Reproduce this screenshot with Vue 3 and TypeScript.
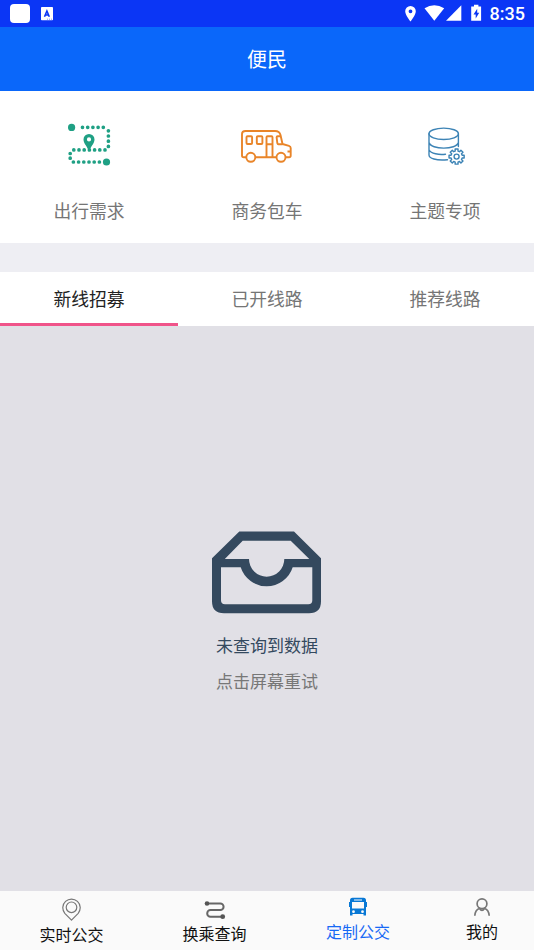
<script setup lang="ts">
import { ref } from 'vue'

type IconName = 'route' | 'van' | 'database'
type NavIcon = 'pin' | 'transfer' | 'bus' | 'user'

const services: { label: string; icon: IconName }[] = [
  { label: '出行需求', icon: 'route' },
  { label: '商务包车', icon: 'van' },
  { label: '主题专项', icon: 'database' },
]
const tabs: string[] = ['新线招募', '已开线路', '推荐线路']
const activeTab = ref<number>(0)

const navItems: { label: string; icon: NavIcon }[] = [
  { label: '实时公交', icon: 'pin' },
  { label: '换乘查询', icon: 'transfer' },
  { label: '定制公交', icon: 'bus' },
  { label: '我的', icon: 'user' },
]
const activeNav = ref<NavIcon>('bus')

// Outline of an eight-toothed gear around (cx, cy)
function gearPath(cx: number, cy: number, inner: number, outer: number): string {
  const points: string[] = []
  for (let i = 0; i < 8; i++) {
    const base = (i * Math.PI) / 4
    const corners: [number, number][] = [
      [-0.25, inner],
      [-0.19, outer],
      [0.19, outer],
      [0.25, inner],
    ]
    for (const [offset, r] of corners) {
      points.push(`${(cx + r * Math.cos(base + offset)).toFixed(2)} ${(cy + r * Math.sin(base + offset)).toFixed(2)}`)
    }
  }
  return `M${points.join('L')}Z`
}
const gear = gearPath(39.6, 37.6, 5.7, 7.7)
</script>

<template>
  <div class="screen">
    <div class="status">
      <div class="status-left">
        <span class="blank-app"></span>
        <svg class="a-app" width="12" height="14" viewBox="0 0 12 14">
          <rect width="12" height="13.3" rx="0.8" fill="#fff" />
          <path d="M3.500 9.800L5.900 4L8.300 9.800M4.500 8H7.300" fill="none" stroke="#0b36f5" stroke-width="1.600" />
          <path d="M6 12.200h1M8 12.200h1M10 12.200h1" stroke="#0b36f5" stroke-width="0.500" />
        </svg>
      </div>
      <div class="status-right">
        <svg width="82" height="20" viewBox="403 4 82 20" fill="#fff">
          <path fill-rule="evenodd" d="M410.500 6a5.300 5.300 0 0 0-5.300 5.300c0 4 5.300 10.200 5.300 10.200s5.300-6.200 5.300-10.200A5.300 5.300 0 0 0 410.500 6Zm0 3.400a1.900 1.900 0 1 1 0 3.800a1.900 1.900 0 0 1 0-3.800Z" />
          <path d="M424.500 8.300Q434.300 2 444.200 8.300L434.300 20.700Z" />
          <path d="M461.300 5.300V20.800H446Z" />
          <path fill-rule="evenodd" d="M474 4.800h4.400v1.600h2.700v14.400h-9.900V6.400h2.800ZM477.200 8.800l-3.700 5.600h2.200v4.200l3.500-5.800h-2Z" />
        </svg>
        <span class="clock">8:35</span>
      </div>
    </div>

    <header class="header">便民</header>

    <section class="services">
      <button v-for="s in services" :key="s.icon" class="service">
        <svg v-if="s.icon === 'route'" width="56" height="56" viewBox="0 0 56 56">
          <g fill="none" stroke="#1fa084" stroke-width="3.700" stroke-linecap="round">
            <path d="M21.500 8.300H44" stroke-dasharray="0 5.200" />
            <path d="M47.400 11.800V29" stroke-dasharray="0 5.200" />
            <path d="M44 30.900H12" stroke-dasharray="0 5.200" />
            <path d="M9.200 34.500V41" stroke-dasharray="0 4.700" />
            <path d="M12.400 43H40" stroke-dasharray="0 5.200" />
          </g>
          <g fill="#1fa084">
            <circle cx="10.600" cy="8.400" r="3.600" />
            <circle cx="45.500" cy="43" r="3.600" />
            <path fill-rule="evenodd" d="M28 15a5.500 5.500 0 0 0-5.500 5.500c0 4 4.200 7.500 5.500 12.300c1.300-4.800 5.500-8.300 5.500-12.300A5.500 5.500 0 0 0 28 15Zm0 3.300a2.100 2.100 0 1 1 0 4.200a2.100 2.100 0 0 1 0-4.200Z" />
          </g>
        </svg>
        <svg v-else-if="s.icon === 'van'" width="56" height="56" viewBox="0 0 56 56">
          <g fill="none" stroke="#e98529" stroke-width="1.900" stroke-linejoin="round">
            <path d="M7.400 38.300H4.800Q3 38.300 3 36.500V15Q3 12 6.500 12H36Q40.500 12 41.500 16L43.500 25L50 26.800Q51.700 27.300 51.700 29V36.500Q51.700 38.300 50 38.300H46.500M16.200 38.300H37.500" />
            <circle cx="11.800" cy="38.300" r="4.500" />
            <circle cx="42" cy="38.300" r="4.500" />
            <rect x="7.500" y="17.200" width="5.600" height="7.800" rx="1" />
            <rect x="17.800" y="17.200" width="5.600" height="7.800" rx="1" />
            <path d="M27.500 38V18.200Q27.500 17.200 28.500 17.200H32.500Q33.500 17.200 33.500 18.200V38M27.500 25.200H33.500M43.500 25.200H39.300Q38.600 25.200 38.300 24L37.600 18.200Q37.600 17.200 38.600 17.200H41.500M48.500 32.500H51.500" />
          </g>
        </svg>
        <svg v-else width="56" height="56" viewBox="0 0 56 56">
          <g fill="none" stroke="#3c83b5" stroke-width="1.400" stroke-linecap="round">
            <ellipse cx="26.700" cy="14.800" rx="14.700" ry="5.700" />
            <path d="M12 14.800V36C12 39.500 19 41.700 30.500 40.700M41.400 14.800V27.500M12 23.500C14 31 39.500 31 41.400 23.500M12 30.800C14 34.800 22 36 28.500 35.200" />
            <path :d="gear" stroke-linejoin="round" />
            <circle cx="39.600" cy="37.600" r="2.500" />
          </g>
        </svg>
        <span class="service-label">{{ s.label }}</span>
      </button>
    </section>

    <nav class="tabs">
      <button
        v-for="(tab, i) in tabs"
        :key="tab"
        class="tab"
        :class="{ active: i === activeTab }"
        @click="activeTab = i"
      >{{ tab }}</button>
    </nav>

    <main class="empty">
      <svg width="110" height="84" viewBox="0 0 110 84">
        <path
          fill="#34495e"
          fill-rule="evenodd"
          d="M27.300 1.600H82L109 28.300V71.300Q109 83.300 97 83.300H12Q0 83.300 0 71.300V28.300ZM30.700 10.700L12.800 29H37A17.500 17.500 0 0 0 72.300 29H97.300L78.700 10.700ZM9 37.300V70.300Q9 74.300 13 74.300H96.300Q100.300 74.300 100.300 70.300V37.300H80.700A27.300 27.300 0 0 1 28.700 37.300Z"
        />
      </svg>
      <p class="empty-title">未查询到数据</p>
      <p class="empty-hint">点击屏幕重试</p>
    </main>

    <footer class="bottom">
      <button
        v-for="item in navItems"
        :key="item.icon"
        class="nav-item"
        :class="[item.icon, { active: item.icon === activeNav }]"
        @click="activeNav = item.icon"
      >
        <svg v-if="item.icon === 'pin'" width="24" height="24" viewBox="0 0 24 24" fill="none" stroke="#777" stroke-width="1.200">
          <path d="M11.500 23.200L4.800 16.300A8.700 8.700 0 1 1 18.200 16.300Z" stroke-linejoin="round" />
          <circle cx="11.500" cy="10.300" r="5.300" />
        </svg>
        <svg v-else-if="item.icon === 'transfer'" width="24" height="24" viewBox="0 0 24 24">
          <path d="M4 6.500H17.300A3.300 3.300 0 0 1 17.300 13.100H7.500A3.300 3.300 0 0 0 7.500 19.700H20" fill="none" stroke="#666" stroke-width="2" />
          <circle cx="4" cy="6.500" r="2.300" fill="#555" />
          <circle cx="19.700" cy="19.700" r="2.400" fill="#555" />
        </svg>
        <svg v-else-if="item.icon === 'bus'" width="24" height="24" viewBox="0 0 24 24">
          <path
            fill="#0878d5"
            fill-rule="evenodd"
            d="M6.500 2.800H17.500Q20 2.800 20 5.300V7H21V12H20V20.500H17.500V19H6.500V20.500H4V12H3V7H4V5.300Q4 2.800 6.500 2.800ZM8 4.500V5.500H16V4.500ZM6 7V13.500H18V7ZM7.500 15.300A1.400 1.400 0 1 0 7.500 18.100A1.400 1.400 0 0 0 7.500 15.300ZM16.500 15.300A1.400 1.400 0 1 0 16.500 18.100A1.400 1.400 0 0 0 16.500 15.300Z"
          />
        </svg>
        <svg v-else width="24" height="24" viewBox="0 0 24 24" fill="none" stroke="#777" stroke-width="1.700">
          <circle cx="12" cy="8.800" r="4.900" />
          <path d="M4.800 20.800C5 16.800 7 14.300 9.500 13.500Q12 17.200 14.500 13.500C17 14.300 19 16.800 19.200 20.800" />
        </svg>
        <span>{{ item.label }}</span>
      </button>
    </footer>
  </div>
</template>

<style>
body {
  margin: 0;
}
</style>

<style scoped>
.screen {
  display: flex;
  flex-direction: column;
  width: 534px;
  height: 950px;
  overflow: hidden;
  background: #e1e0e6;
  font-family: Roboto, 'Noto Sans CJK SC', sans-serif;
}
button {
  border: 0;
  padding: 0;
  background: none;
  font: inherit;
  color: inherit;
}
svg {
  display: block;
  flex: none;
}
.status {
  display: flex;
  justify-content: space-between;
  height: 27px;
  box-sizing: border-box;
  padding: 4px 9px 0 10px;
  background: #0b36f5;
}
.status-left {
  display: flex;
  gap: 11px;
}
.blank-app {
  width: 20px;
  height: 19px;
  border-radius: 4px;
  background: #fff;
}
.a-app {
  margin-top: 3px;
}
.status-right {
  display: flex;
  gap: 5px;
}
.clock {
  color: #fff;
  font-size: 18px;
  font-weight: 500;
  line-height: 20px;
}
.header {
  height: 64px;
  background: #0a67fa;
  color: #fff;
  font-size: 20px;
  line-height: 66px;
  text-align: center;
}
.services {
  display: grid;
  grid-template-columns: repeat(3, 1fr);
  height: 151.500px;
  background: #fff;
}
.service {
  display: flex;
  flex-direction: column;
  align-items: center;
  padding-top: 28px;
  gap: 23px;
}
.service-label {
  font-size: 17.800px;
  line-height: 28px;
  color: #757575;
}
.tabs {
  display: grid;
  grid-template-columns: repeat(3, 1fr);
  height: 83.500px;
  box-sizing: border-box;
  border-top: 29.500px solid #eeeef3;
  background: #fff;
}
.tab {
  padding-top: 2px;
  font-size: 17.800px;
  color: #757575;
  border-bottom: 3px solid transparent;
}
.tab.active {
  color: #222;
  border-bottom-color: #f0548a;
}
.empty {
  flex: 1;
  display: flex;
  flex-direction: column;
  align-items: center;
  padding-top: 204px;
}
.empty p {
  margin: 0;
  font-size: 17px;
  line-height: 26px;
}
.empty .empty-title {
  margin-top: 19px;
  color: #34495e;
}
.empty .empty-hint {
  margin-top: 10px;
  color: #777;
}
.bottom {
  display: grid;
  grid-template-columns: 143px 143px 144px 104px;
  height: 59.500px;
  background: #fafafa;
  color: #111;
}
.nav-item {
  display: flex;
  flex-direction: column;
  align-items: center;
  padding-top: 6px;
  gap: 3px;
  font-size: 16px;
  line-height: 24px;
}
.nav-item.transfer span {
  margin-top: -1px;
}
.nav-item.bus,
.nav-item.user {
  padding-top: 4px;
}
.nav-item.bus span,
.nav-item.user span {
  margin-top: -1px;
}
.nav-item.active {
  color: #1769f5;
}
</style>
